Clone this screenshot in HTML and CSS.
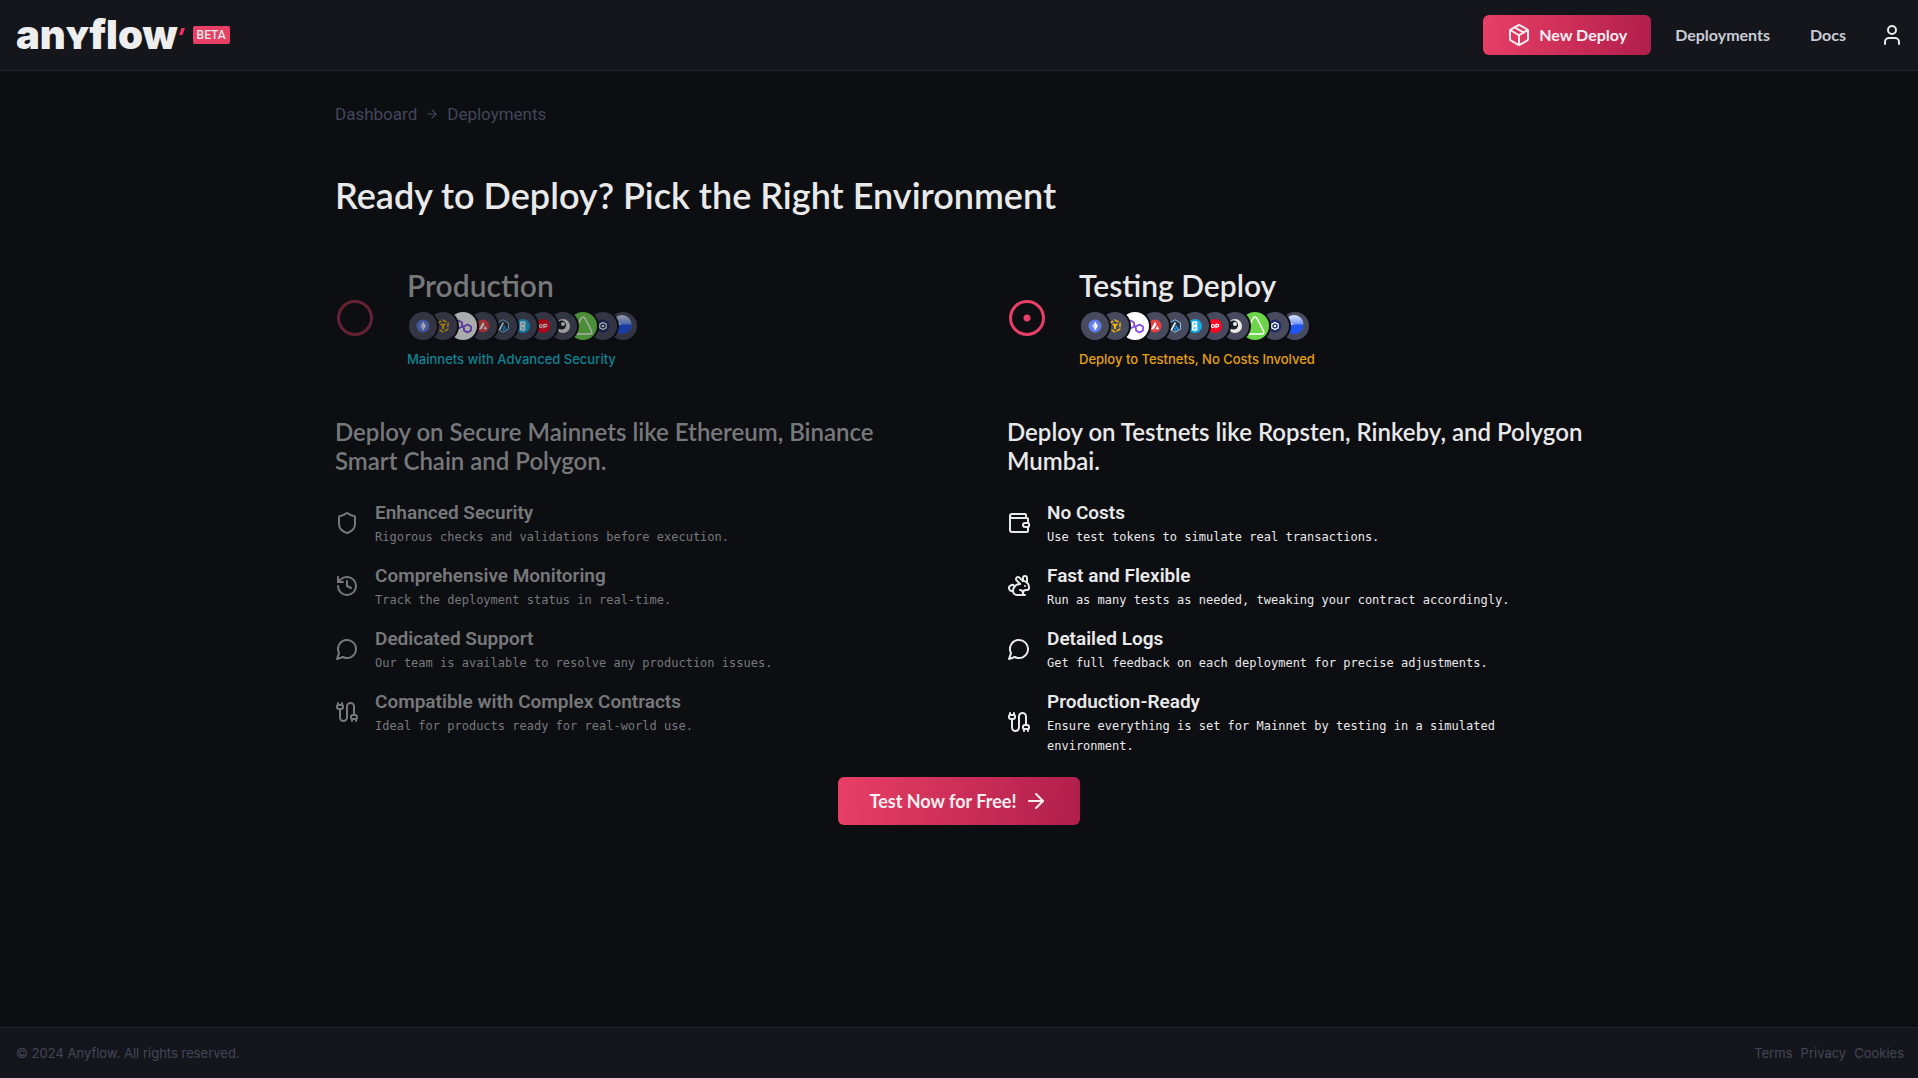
FILE: index.html
```html
<!DOCTYPE html>
<html lang="en">
<head>
<meta charset="utf-8">
<meta name="viewport" content="width=device-width, initial-scale=1">
<title>Anyflow – Deployments</title>
<link rel="stylesheet" href="styles.css">
</head>
<body>
<svg class="sprite" aria-hidden="true">
  <defs>
    <linearGradient id="fade-blue" x1="0" y1="0" x2="0" y2="1"><stop offset="0" stop-color="#dfe7ff"/><stop offset=".5" stop-color="#6d93f7"/><stop offset="1" stop-color="#2257ee"/></linearGradient>
    <symbol id="package" viewBox="0 0 24 24"><path d="M11 21.73a2 2 0 0 0 2 0l7-4A2 2 0 0 0 21 16V8a2 2 0 0 0-1-1.73l-7-4a2 2 0 0 0-2 0l-7 4A2 2 0 0 0 3 8v8a2 2 0 0 0 1 1.73z"/><path d="M12 22V12"/><path d="m3.3 7 7.703 4.734a2 2 0 0 0 1.994 0L20.7 7"/><path d="m7.5 4.27 9 5.15"/></symbol>
    <symbol id="user" viewBox="0 0 24 24"><path d="M19 21v-2a4 4 0 0 0-4-4H9a4 4 0 0 0-4 4v2"/><circle cx="12" cy="7" r="4"/></symbol>
    <symbol id="arrow" viewBox="0 0 24 24"><path d="M5 12h14"/><path d="m12 5 7 7-7 7"/></symbol>
    <symbol id="shield" viewBox="0 0 24 24"><path d="M20 13c0 5-3.5 7.5-7.66 8.95a1 1 0 0 1-.67-.01C7.5 20.5 4 18 4 13V6a1 1 0 0 1 1-1c2 0 4.5-1.2 6.24-2.72a1.17 1.17 0 0 1 1.52 0C14.51 3.81 17 5 19 5a1 1 0 0 1 1 1z"/></symbol>
    <symbol id="history" viewBox="0 0 24 24"><path d="M3 12a9 9 0 1 0 9-9 9.75 9.75 0 0 0-6.74 2.74L3 8"/><path d="M3 3v5h5"/><path d="M12 7v5l4 2"/></symbol>
    <symbol id="message" viewBox="0 0 24 24"><path d="M7.9 20A9 9 0 1 0 4 16.1L2 22Z"/></symbol>
    <symbol id="cable" viewBox="0 0 24 24"><path d="M17 21v-2a1 1 0 0 1-1-1v-1a2 2 0 0 1 2-2h2a2 2 0 0 1 2 2v1a1 1 0 0 1-1 1v2"/><path d="M19 15V6.5a1 1 0 0 0-7 0v11a1 1 0 0 1-7 0V9"/><path d="M21 19h-4"/><path d="M3 5h4V3"/><path d="M7 5a1 1 0 0 1 1 1v1a2 2 0 0 1-2 2H4a2 2 0 0 1-2-2V6a1 1 0 0 1 1-1V3"/></symbol>
    <symbol id="wallet" viewBox="0 0 24 24"><path d="M19 7V4a1 1 0 0 0-1-1H5a2 2 0 0 0 0 4h15a1 1 0 0 1 1 1v4h-3a2 2 0 0 0 0 4h3a1 1 0 0 0 1-1v-2a1 1 0 0 0-1-1"/><path d="M3 5v14a2 2 0 0 0 2 2h15a1 1 0 0 0 1-1v-4"/></symbol>
    <symbol id="rabbit" viewBox="0 0 24 24"><path d="M13 16a3 3 0 0 1 2.24 5"/><path d="M18 12h.01"/><path d="M18 21h-8a4 4 0 0 1-4-4 7 7 0 0 1 7-7h.2L9.6 6.4a1 1 0 1 1 2.8-2.8L15.8 7h.2c3.3 0 6 2.7 6 6v1a2 2 0 0 1-2 2h-1a3 3 0 0 0-3 3"/><path d="M20 8.54V4a2 2 0 1 0-4 0v3"/><path d="M7.612 12.524a3 3 0 1 0-1.6 4.3"/></symbol>

    <symbol id="eth" viewBox="0 0 28 28"><circle cx="14" cy="14" r="6.5" fill="#627eea"/><path d="M14 9.5l2.8 4.6-2.8 4.4-2.8-4.4z" fill="#c9d3fb"/><path d="M14 9.5v9l2.8-4.4z" fill="#fff"/></symbol>
    <symbol id="bnb" viewBox="0 0 28 28"><path d="M14 8l5 3v6l-5 3-5-3v-6z" fill="none" stroke="#f0b90b" stroke-width="1.5" stroke-dasharray="4.3 1.5"/><path d="M11.5 12l2.5 1.4 2.5-1.4M14 13.4V17" fill="none" stroke="#f0b90b" stroke-width="2"/></symbol>
    <symbol id="polygon" viewBox="0 0 28 28"><path d="M13 14.500l-3.500 2-3.500-2v-4l3.500-2 3.500 2v2l2 4v2l3.500 2 3.500-2v-4l-3.500-2-3.500 2" fill="none" stroke="#8247e5" stroke-width="1.700" stroke-linejoin="round" stroke-linecap="round"/></symbol>
    <symbol id="avax" viewBox="0 0 28 28"><circle cx="14" cy="14" r="6.5" fill="#e84142"/><path d="M14 9.8l1.5 2.7-2.8 4.8H10zM16.3 14l1.9 3.3h-3.8z" fill="#fff"/></symbol>
    <symbol id="arb" viewBox="0 0 28 28"><path d="M14 7.8l5.4 3.1v6.200L14 20.200l-5.400-3.100v-6.200z" fill="#213147" stroke="#9dcced" stroke-width="1"/><path d="M9.800 17.500l3.600-7h1.800l-4.200 8z" fill="#fff"/><path d="M14 14.500l1-1.700 3 4.800-1.200.8zM12.800 16.500l.8-1.400 2.200 3.700-1.300.6z" fill="#28a0f0"/></symbol>
    <symbol id="cyan" viewBox="0 0 28 28"><circle cx="14" cy="14" r="7" fill="#16ade6"/><path d="M11.5 10h4.500v3.500h-4.500zM11.500 14.500h4.500V18h-4.500zM12.800 9v10M14.800 9v10" fill="none" stroke="#fff" stroke-width="1"/></symbol>
    <symbol id="op" viewBox="0 0 28 28"><circle cx="14" cy="14" r="7" fill="#ff0420"/><circle cx="11.900" cy="14" r="1.500" fill="none" stroke="#fff" stroke-width="1.200"/><path d="M14.900 16.200v-3.800h1.700a1.200 1.200 0 0 1 0 2.400h-1.700" fill="none" stroke="#fff" stroke-width="1.200"/></symbol>
    <symbol id="swirl" viewBox="0 0 28 28"><circle cx="14" cy="14" r="7" fill="#eeeae6"/><circle cx="12.500" cy="13" r="4.600" fill="#15202b"/><circle cx="14" cy="12" r="2" fill="#eeeae6"/></symbol>
    <symbol id="tri" viewBox="0 0 28 28"><path d="M12 6.500q2-3 4 0l6.500 12.500q1 3-2 3h-13q-3 0-2-3z" fill="none" stroke="#fff" stroke-width="1.500"/></symbol>
    <symbol id="hex" viewBox="0 0 28 28"><circle cx="14" cy="14" r="6.500" fill="#1c2c66"/><path d="M14 10.400l3.200 1.800v3.600L14 17.600l-3.200-1.800v-3.600z" fill="none" stroke="#fff" stroke-width="1.200"/><circle cx="14" cy="14" r="1.200" fill="#fff"/></symbol>
    <symbol id="blue" viewBox="0 0 28 28"><circle cx="13" cy="12.500" r="9.500" fill="url(#fade-blue)"/><path d="M13 12.500h9.500a9.500 9.500 0 0 1-19 0z" fill="#1f55ee"/><path d="M4 8l9 4.500H3.500z" fill="#fff"/></symbol>
  </defs>
</svg>

<header class="topbar">
  <a class="brand" href="#" aria-label="anyflow beta">
    <span class="wordmark">an<span class="small-cap">y</span>flow</span>
    <svg class="tick" viewBox="0 0 6 8" aria-hidden="true"><path d="M2.500 0H6L3.500 7H0z" fill="#f0305e"/></svg>
    <span class="badge">BETA</span>
  </a>
  <nav class="nav">
    <button class="btn btn-small" type="button"><svg class="icon"><use href="#package"/></svg>New Deploy</button>
    <a class="nav-link" href="#">Deployments</a>
    <a class="nav-link" href="#">Docs</a>
    <button class="user" type="button" aria-label="Account"><svg class="icon"><use href="#user"/></svg></button>
  </nav>
</header>

<main class="page">
  <nav class="crumbs" aria-label="Breadcrumb">
    <a href="#">Dashboard</a>
    <svg class="icon crumb-arrow"><use href="#arrow"/></svg>
    <a href="#">Deployments</a>
  </nav>
  <h1>Ready to Deploy? Pick the Right Environment</h1>

  <form class="picker">
    <div class="options">
      <section class="option muted">
        <div class="choice">
          <input type="radio" name="environment" id="production">
          <div class="choice-text">
            <label for="production">Production</label>
            <ul class="chains">
              <li><svg><use href="#eth"/></svg></li><li><svg><use href="#bnb"/></svg></li><li class="white"><svg><use href="#polygon"/></svg></li><li><svg><use href="#avax"/></svg></li><li><svg><use href="#arb"/></svg></li><li><svg><use href="#cyan"/></svg></li><li><svg><use href="#op"/></svg></li><li><svg><use href="#swirl"/></svg></li><li class="green"><svg><use href="#tri"/></svg></li><li><svg><use href="#hex"/></svg></li><li><svg><use href="#blue"/></svg></li>
            </ul>
            <p class="note teal">Mainnets with Advanced Security</p>
          </div>
        </div>
        <h2>Deploy on Secure Mainnets like Ethereum, Binance Smart Chain and Polygon.</h2>
        <ul class="features">
          <li><svg class="icon"><use href="#shield"/></svg><div><h3>Enhanced Security</h3><p>Rigorous checks and validations before execution.</p></div></li>
          <li><svg class="icon"><use href="#history"/></svg><div><h3>Comprehensive Monitoring</h3><p>Track the deployment status in real-time.</p></div></li>
          <li><svg class="icon"><use href="#message"/></svg><div><h3>Dedicated Support</h3><p>Our team is available to resolve any production issues.</p></div></li>
          <li><svg class="icon"><use href="#cable"/></svg><div><h3>Compatible with Complex Contracts</h3><p>Ideal for products ready for real-world use.</p></div></li>
        </ul>
      </section>
      <section class="option">
        <div class="choice">
          <input type="radio" name="environment" id="testing" checked>
          <div class="choice-text">
            <label for="testing">Testing Deploy</label>
            <ul class="chains">
              <li><svg><use href="#eth"/></svg></li><li><svg><use href="#bnb"/></svg></li><li class="white"><svg><use href="#polygon"/></svg></li><li><svg><use href="#avax"/></svg></li><li><svg><use href="#arb"/></svg></li><li><svg><use href="#cyan"/></svg></li><li><svg><use href="#op"/></svg></li><li><svg><use href="#swirl"/></svg></li><li class="green"><svg><use href="#tri"/></svg></li><li><svg><use href="#hex"/></svg></li><li><svg><use href="#blue"/></svg></li>
            </ul>
            <p class="note amber">Deploy to Testnets, No Costs Involved</p>
          </div>
        </div>
        <h2>Deploy on Testnets like Ropsten, Rinkeby, and Polygon Mumbai.</h2>
        <ul class="features">
          <li><svg class="icon"><use href="#wallet"/></svg><div><h3>No Costs</h3><p>Use test tokens to simulate real transactions.</p></div></li>
          <li><svg class="icon"><use href="#rabbit"/></svg><div><h3>Fast and Flexible</h3><p>Run as many tests as needed, tweaking your contract accordingly.</p></div></li>
          <li><svg class="icon"><use href="#message"/></svg><div><h3>Detailed Logs</h3><p>Get full feedback on each deployment for precise adjustments.</p></div></li>
          <li><svg class="icon"><use href="#cable"/></svg><div><h3>Production-Ready</h3><p>Ensure everything is set for Mainnet by testing in a simulated environment.</p></div></li>
        </ul>
      </section>
    </div>
    <button class="btn btn-large" type="submit">Test Now for Free!<svg class="icon"><use href="#arrow"/></svg></button>
  </form>
</main>

<footer class="footer">
  <p>© 2024 Anyflow. All rights reserved.</p>
  <nav class="legal" aria-label="Legal"><a href="#">Terms</a><a href="#">Privacy</a><a href="#">Cookies</a></nav>
</footer>
</body>
</html>
```
FILE: styles.css
```css
:root {
  --page: #0d0e12;
  --bar: #15161b;
  --line: #23252d;
  --text: #e9e9ea;
  --dim: #43465a;
  --rose: #e83f66;
  --display: Lato, "Open Sans", sans-serif;
  --body: Roboto, "Noto Sans", sans-serif;
  --mono: "DejaVu Sans Mono", "Liberation Mono", monospace;
}

* { box-sizing: border-box; margin: 0; padding: 0; }

body {
  display: flex;
  flex-direction: column;
  min-height: 100vh;
  background: var(--page);
  color: var(--text);
  font-family: var(--body);
}

a { color: inherit; text-decoration: none; }
ul { list-style: none; }
button { border: 0; color: inherit; cursor: pointer; }
.sprite { position: absolute; width: 0; height: 0; }

.icon {
  flex: none;
  width: 24px;
  height: 24px;
  fill: none;
  stroke: currentColor;
  stroke-width: 2;
  stroke-linecap: round;
  stroke-linejoin: round;
}

/* Header */
.topbar {
  display: flex;
  align-items: center;
  justify-content: space-between;
  height: 71px;
  padding: 0 4px 0 16px;
  background: var(--bar);
  border-bottom: 1px solid var(--line);
}
.brand { display: flex; align-items: center; }
.wordmark { font: 900 40px/56px Inter, sans-serif; color: #eee; }
.small-cap { font-variant-caps: small-caps; }
.tick { width: 6px; height: 8px; margin: 0 8px 6px 1px; }
.badge {
  padding: 0 4px;
  border-radius: 2px;
  background: var(--rose);
  font: 500 12px/18px var(--body);
}
.nav { display: flex; align-items: center; gap: 8px; }
.nav-link { padding: 0 16px; font: 700 16px/24px var(--display); color: #c9ccd6; }
.user { display: flex; padding: 10px; background: none; }

.btn {
  display: flex;
  align-items: center;
  gap: 8px;
  border-radius: 6px;
  background: linear-gradient(100deg, #e83f66, #b01e4b);
  color: #fbeef1;
}
.btn-small { height: 40px; padding: 0 24px; font: 700 16px/24px var(--display); }
.btn-large { height: 48px; padding: 0 32px; font: 700 18px/24px var(--display); }

/* Content */
.page {
  flex: 1;
  width: 100%;
  max-width: 1280px;
  margin: 0 auto;
  padding: 32px 16px;
}
.crumbs {
  display: flex;
  align-items: center;
  gap: 8px;
  margin-bottom: 48px;
  font-size: 17px;
  line-height: 22px;
  color: var(--dim);
}
.crumb-arrow { width: 14px; height: 14px; }
h1 { margin-bottom: 50px; font: 600 36px/44px var(--display); }

.picker { display: flex; flex-direction: column; align-items: center; gap: 21px; }
.options { display: grid; grid-template-columns: 1fr 1fr; gap: 96px; width: 100%; }

.choice { display: flex; align-items: center; gap: 32px; margin-bottom: 48px; }
.choice input {
  appearance: none;
  flex: none;
  width: 36px;
  height: 36px;
  margin: 0 2px;
  border: 3px solid var(--rose);
  border-radius: 50%;
}
.choice input:checked { background: radial-gradient(circle, var(--rose) 3px, transparent 4px); }
.choice-text { display: grid; gap: 7px; }
.choice label { font: 600 30px/36px var(--display); }
.note { font: 500 13px/20px Inter, sans-serif; }
.teal { color: #0f8393; }
.amber { color: #e6a20d; }

/* Each chain badge tucks under the one before it */
.chains { display: flex; }
.chains li {
  width: 32px;
  height: 32px;
  margin-right: -12px;
  border: 2px solid var(--page);
  border-radius: 50%;
  background: #484b5e;
  overflow: hidden;
  position: relative;
}
.chains li:nth-child(1) { z-index: 11; }
.chains li:nth-child(2) { z-index: 10; }
.chains li:nth-child(3) { z-index: 9; }
.chains li:nth-child(4) { z-index: 8; }
.chains li:nth-child(5) { z-index: 7; }
.chains li:nth-child(6) { z-index: 6; }
.chains li:nth-child(7) { z-index: 5; }
.chains li:nth-child(8) { z-index: 4; }
.chains li:nth-child(9) { z-index: 3; }
.chains li:nth-child(10) { z-index: 2; }
.chains li:nth-child(11) { z-index: 1; }
.chains .white { background: #fff; }
.chains .green { background: #6cd54a; }
.chains svg { display: block; width: 28px; height: 28px; }

h2 { margin-bottom: 24px; font: 600 24px/29px var(--display); }

.features { display: grid; gap: 15px; }
.features li { display: flex; align-items: center; gap: 16px; }
h3 { font-size: 19px; font-weight: 600; line-height: 28px; }
.features p { font: 12px/20px var(--mono); }

.muted { color: #77787a; }
.muted .choice input { opacity: 0.4; }
.muted .chains { opacity: 0.65; }

/* Footer */
.footer {
  display: flex;
  align-items: center;
  justify-content: space-between;
  height: 51px;
  padding: 0 14px 0 16px;
  border-top: 1px solid var(--line);
  background: var(--bar);
  color: var(--dim);
  font: 13px/20px Inter, sans-serif;
}
.legal { display: flex; gap: 8px; }
```
